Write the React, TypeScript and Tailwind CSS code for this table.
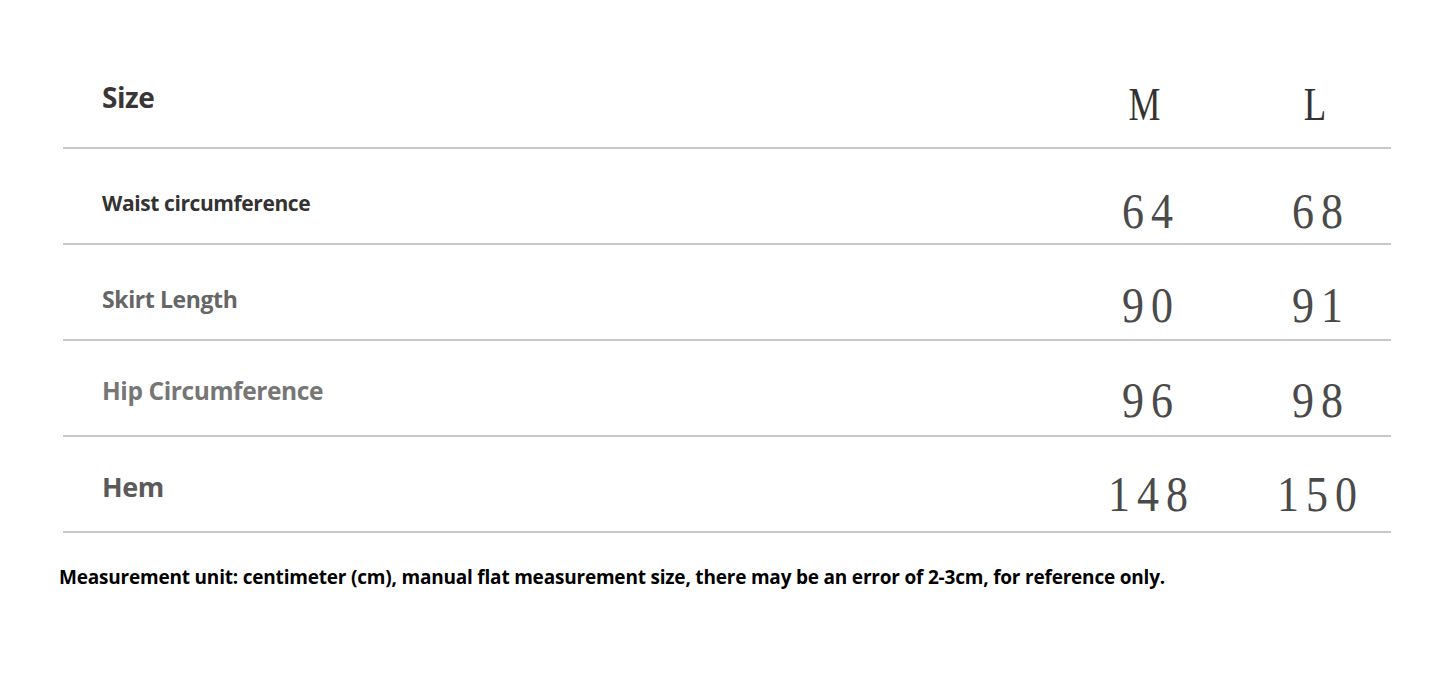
const rows = [
  { label: 'Waist circumference', m: '64', l: '68', size: 'text-[21px]', color: 'text-[#333333]', lp: 'pt-[16px]', np: 'pt-[30px]' },
  { label: 'Skirt Length', m: '90', l: '91', size: 'text-[23px]', color: 'text-[#666666]', lp: 'pt-[14px]', np: 'pt-[26px]' },
  { label: 'Hip Circumference', m: '96', l: '98', size: 'text-[24.5px]', color: 'text-[#767676]', lp: 'pt-[6px]', np: 'pt-[24px]' },
  { label: 'Hem', m: '148', l: '150', size: 'text-[27px]', color: 'text-[#5a5a5a]', lp: 'pt-[6px]', np: 'pt-[20px]' },
];

const sans = "font-['Open_Sans','Liberation_Sans',sans-serif]";
const serif = "font-['Liberation_Serif','DejaVu_Serif',serif]";

function Num({ v }: { v: string }) {
  return (
    <span className={`${serif} inline-block scale-x-[0.88] text-[50px] leading-none tracking-[8px] text-[#4a4a4a]`}>
      {v}
    </span>
  );
}

export default function App() {
  return (
    <div className="w-[1445px] h-[687px] bg-white overflow-hidden">
      <div className="ml-[63px] w-[1328px]">
        {/* header */}
        <div className="flex h-[149px] items-center border-b-2 border-[#c9c9c9]">
          <div className={`flex-1 pl-[39px] pt-[46px] ${sans} text-[28px] font-bold tracking-[-0.5px] text-[#3b3636]`}>
            Size
          </div>
          <div className="w-[172px] text-center pt-[62px] -ml-[4px]">
            <span className={`${serif} inline-block scale-x-[0.78] text-[46px] leading-none text-[#333333]`}>M</span>
          </div>
          <div className="w-[161px] pl-[9px] text-center pt-[62px]">
            <span className={`${serif} inline-block scale-x-[0.8] text-[46px] leading-none text-[#333333]`}>L</span>
          </div>
        </div>

        {rows.map((r) => (
          <div key={r.label} className="flex h-[96px] items-center border-b-2 border-[#c9c9c9]">
            <div className={`flex-1 pl-[39px] ${r.lp} ${sans} ${r.size} font-bold tracking-[-0.4px] ${r.color}`}>
              {r.label}
            </div>
            <div className={`w-[172px] pl-[14px] text-center ${r.np}`}>
              <Num v={r.m} />
            </div>
            <div className={`w-[161px] pl-[20px] text-center ${r.np}`}>
              <Num v={r.l} />
            </div>
          </div>
        ))}
      </div>

      <p className={`ml-[59px] mt-[30px] ${sans} text-[19px] font-bold tracking-[-0.2px] text-black`}>
        Measurement unit: centimeter (cm), manual flat measurement size, there may be an error of 2-3cm, for reference only.
      </p>
    </div>
  );
}
